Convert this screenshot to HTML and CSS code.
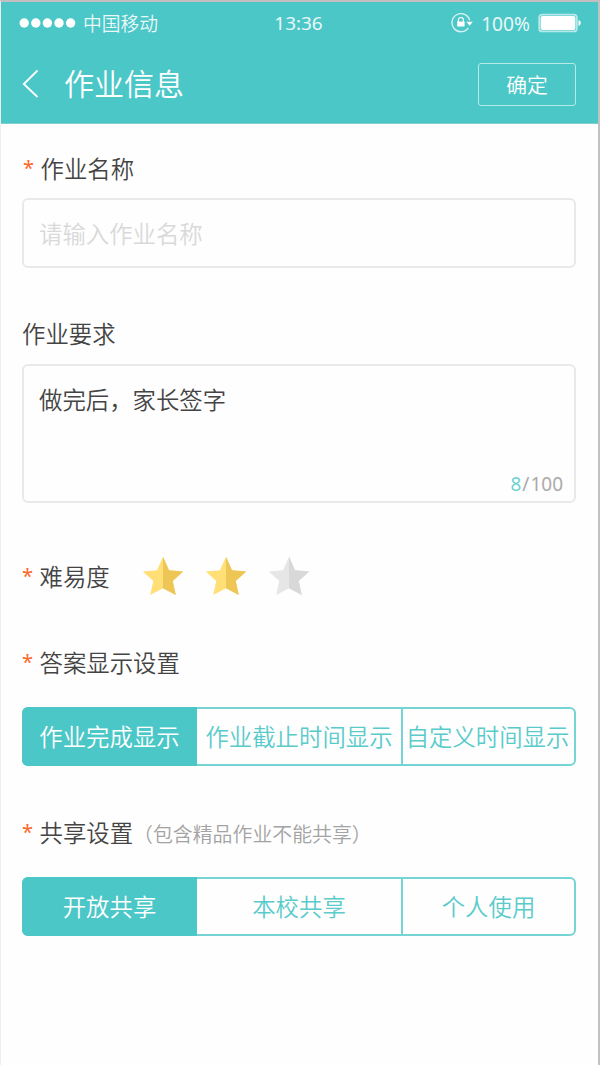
FILE: index.html
```html
<!DOCTYPE html>
<html lang="zh-CN">
<head>
<meta charset="utf-8">
<title>作业信息</title>
<link rel="stylesheet" href="styles.css">
</head>
<body>
<div class="screen">
  <header class="header">
    <div class="status">
      <div class="carrier">
        <svg class="signal" width="58" height="12" viewBox="0 0 58 12"><circle cx="5.2" cy="6" r="4.7"/><circle cx="16.8" cy="6" r="4.7"/><circle cx="28.4" cy="6" r="4.7"/><circle cx="40" cy="6" r="4.7"/><circle cx="51.6" cy="6" r="4.7"/></svg>
        <span class="carrier-name">中国移动</span>
      </div>
      <span class="clock">13:36</span>
      <div class="power">
        <svg class="lock" width="22" height="20" viewBox="0 0 22 20"><path class="lock-ring" d="M18.7 7.4A9 9 0 1 0 17.4 14.8"/><path class="solid" d="M15.4 8.8h6.4l-3.2 3.9zM6.2 8.6h7.4v5H6.2z"/><path class="shackle" d="M7.4 9V7a2.5 2.5 0 0 1 5 0v2"/></svg>
        <span class="percent">100%</span>
        <svg class="battery" width="44" height="20" viewBox="0 0 44 20"><rect class="shell" x="1.2" y="1.6" width="37.6" height="16.8" rx="3"/><rect class="solid" x="2.6" y="3" width="34.8" height="14" rx="2"/><path class="solid" d="M40.5 7c3 .8 3 5.2 0 6z"/></svg>
      </div>
    </div>
    <div class="nav">
      <svg class="back" width="18" height="30" viewBox="0 0 18 30"><path d="M16.5 1.5L2.8 15 16.5 28"/></svg>
      <h1 class="title">作业信息</h1>
      <button class="confirm">确定</button>
    </div>
  </header>
  <main class="form">
    <div class="label label-name"><span class="star-mark">*</span><span class="label-text">作业名称</span></div>
    <div class="input"><span>请输入作业名称</span></div>
    <div class="label label-demand"><span>作业要求</span></div>
    <div class="textarea">
      <div class="content">做完后，家长签字</div>
      <div class="counter"><span class="count">8</span><span class="slash">/</span>100</div>
    </div>
    <div class="label label-level"><span class="star-mark">*</span><span class="label-text">难易度</span>
      <div class="stars">
        <svg class="star" width="42" height="40" viewBox="0 0 42 40"><path class="star-base" d="M21 .8L27 14.2 41.2 15.5 30.7 24.9 33.8 39 21 32.3 8.2 39 11.3 24.9.8 15.5 15 14.2z"/><path class="star-shade" d="M21 .8L27 14.2 41.2 15.5 30.7 24.9 33.8 39 21 32.3z"/></svg>
        <svg class="star" width="42" height="40" viewBox="0 0 42 40"><path class="star-base" d="M21 .8L27 14.2 41.2 15.5 30.7 24.9 33.8 39 21 32.3 8.2 39 11.3 24.9.8 15.5 15 14.2z"/><path class="star-shade" d="M21 .8L27 14.2 41.2 15.5 30.7 24.9 33.8 39 21 32.3z"/></svg>
        <svg class="star star-off" width="42" height="40" viewBox="0 0 42 40"><path class="star-base" d="M21 .8L27 14.2 41.2 15.5 30.7 24.9 33.8 39 21 32.3 8.2 39 11.3 24.9.8 15.5 15 14.2z"/><path class="star-shade" d="M21 .8L27 14.2 41.2 15.5 30.7 24.9 33.8 39 21 32.3z"/></svg>
      </div>
    </div>
    <div class="label label-answer"><span class="star-mark">*</span><span class="label-text">答案显示设置</span></div>
    <div class="segments"><div class="segment active">作业完成显示</div><div class="segment">作业截止时间显示</div><div class="segment segment-last">自定义时间显示</div></div>
    <div class="label label-share"><span class="star-mark">*</span><span class="label-text">共享设置</span><span class="hint">（包含精品作业不能共享）</span></div>
    <div class="segments"><div class="segment active">开放共享</div><div class="segment">本校共享</div><div class="segment">个人使用</div></div>
  </main>
</div>
</body>
</html>
```
FILE: styles.css
```css
* { box-sizing: border-box; }
body {
  margin: 0;
  font-family: "Noto Sans CJK SC", sans-serif;
  font-weight: 350;
  font-size: 23.4px;
  color: #444;
  background: #fefefe;
}
.screen {
  height: 1065px;
  border-top: 2px solid #c3bfc0;
  border-left: 1px solid #eee;
  border-right: 2px solid #c2c2c2;
  overflow: hidden;
}
.header { height: 122px; background: #4cc7c7; color: #fff; border-bottom: 1px solid #7fcfcf; }
.status {
  height: 42px;
  padding: 0 16px 0 18px;
  display: grid;
  grid-template-columns: 1fr auto 1fr;
  align-items: center;
  font-size: 18.8px;
  line-height: 40px;
}
.carrier, .power { display: flex; align-items: center; }
.carrier-name { margin-left: 6px; opacity: .88; }
.signal, .solid { fill: #fff; }
.power { justify-content: flex-end; }
.clock, .percent { font-family: "Noto Sans", sans-serif; font-weight: 400; opacity: .88; font-size: 18.9px; }
.clock { margin-right: 4px; }
.percent { margin: 2px 8px 0 8px; font-size: 19.2px; }
.lock-ring { fill: none; stroke: #d5f2f2; stroke-width: 1.4; }
.shackle { fill: none; stroke: #fff; stroke-width: 1.2; }
.lock, .battery { display: block; flex: none; }
.shell { fill: none; stroke: #b8e9e9; stroke-width: 1.8; }
.nav { height: 80px; padding: 0 22px 0 20px; display: flex; align-items: center; }
.back { fill: none; stroke: #fff; stroke-width: 1.8; }
.title { margin: 0 auto 4px 25px; font-size: 30px; font-weight: 350; line-height: 76px; }
.confirm {
  width: 98px;
  height: 43px;
  padding: 0;
  border: 1.5px solid #b7e9e9;
  border-radius: 3px;
  background: transparent;
  color: #fff;
  font: 350 20.8px/40px "Noto Sans CJK SC", sans-serif;
}
.form { padding: 0 22px 0 21px; }
.label { display: flex; align-items: center; height: 34px; line-height: 34px; white-space: nowrap; }
.star-mark { width: 17.5px; padding-bottom: 1px; color: #ff6426; font-family: "Noto Sans", sans-serif; font-weight: 400; font-size: 20px; }
.label-name { margin-top: 27px; padding-left: 1px; }
.input {
  height: 70px;
  margin-top: 13px;
  padding: 0 15px;
  border: 2px solid #e9e9e9;
  border-radius: 6px;
  color: #d9d9d9;
  line-height: 66px;
}
.label-demand { margin-top: 48px; }
.textarea {
  height: 139px;
  margin-top: 14px;
  padding: 16px 11px 0 15px;
  border: 2px solid #e9e9e9;
  border-radius: 6px;
  display: flex;
  flex-direction: column;
}
.content { line-height: 34px; }
.counter { margin: 54px 0 0; text-align: right; color: #aaa; font: 400 19px/28px "Noto Sans", sans-serif; }
.count { color: #6ed2d2; }
.slash { margin: 0 1px; }
.label-level { margin-top: 56px; }
.stars { display: flex; gap: 21px; margin-left: 32px; }
.star { display: block; }
.star-base { fill: #ffdf76; }
.star-shade { fill: #edc655; }
.star-off .star-base { fill: #e6e6e6; }
.star-off .star-shade { fill: #d8d8d8; }
.label-answer { margin-top: 52px; }
.segments {
  display: grid;
  grid-template-columns: 173px 204px 1fr;
  height: 59px;
  margin-top: 28px;
  border: 2px solid #76d4d4;
  border-radius: 6px;
  color: #5acbcb;
  line-height: 55px;
  text-align: center;
  white-space: nowrap;
}
.segment + .segment + .segment { border-left: 2px solid #76d4d4; }
.segment-last { padding-right: 2px; }
.active { margin: -2px 0 -2px -2px; border-radius: 6px 0 0 6px; background: #4cc7c7; color: #fff; line-height: 59px; }
.label-share { margin-top: 49px; }
.hint { padding-top: 3px; font-size: 19.9px; color: #a3a3a3; }
```
